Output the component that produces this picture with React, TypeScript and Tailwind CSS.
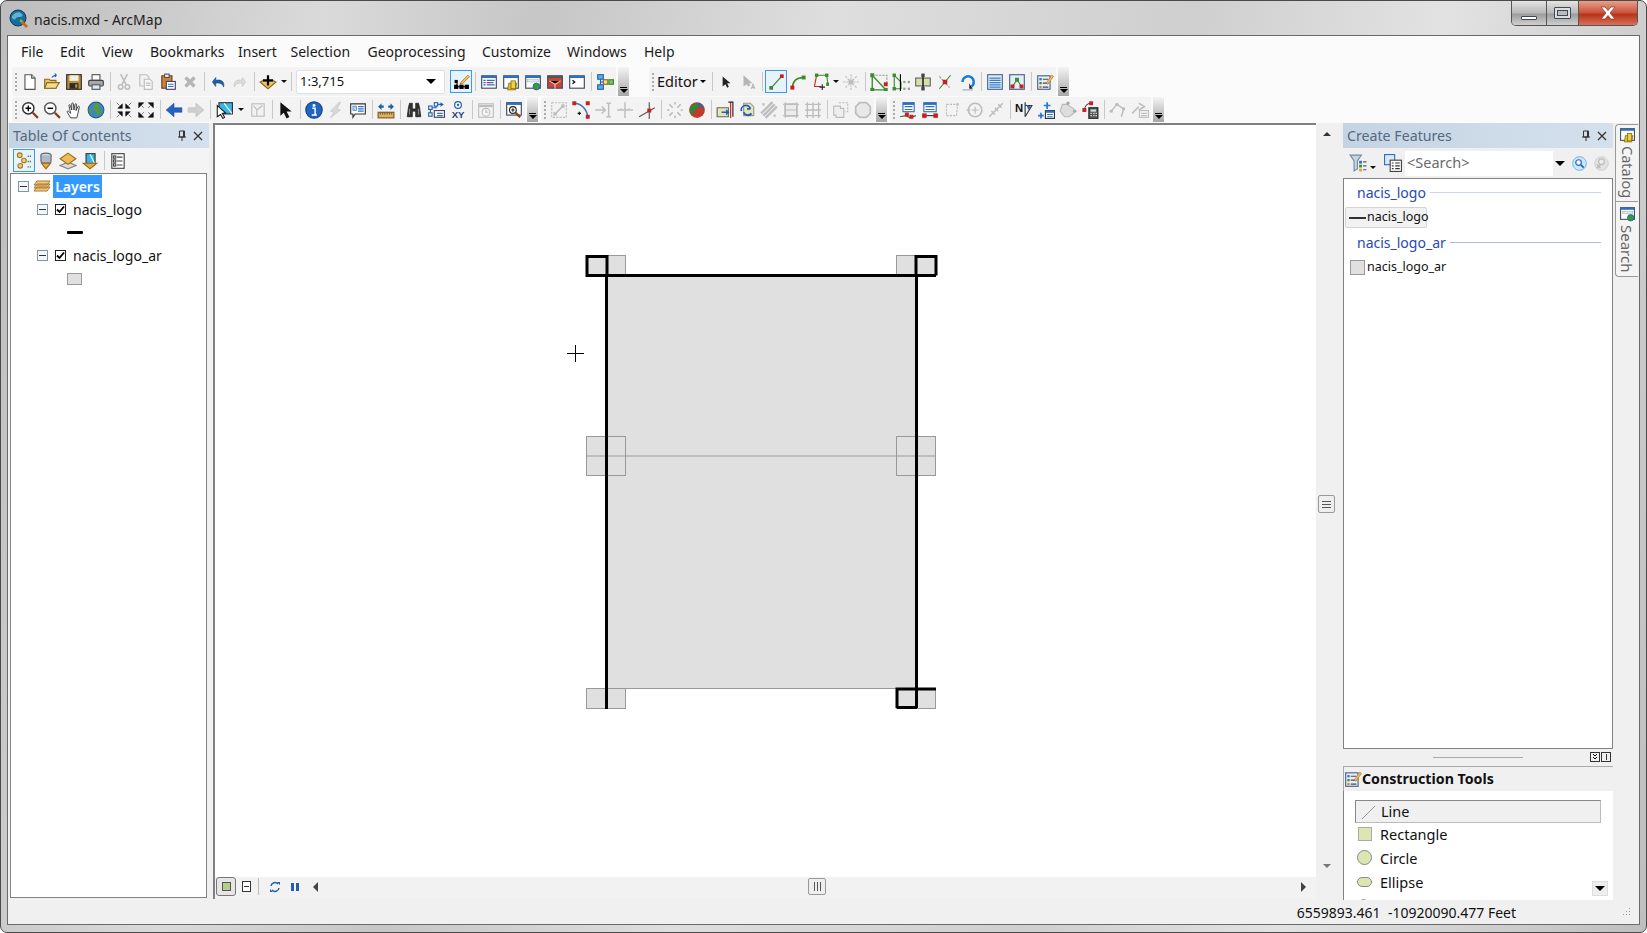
import type { ReactNode } from "react";

const R = "#c8201c";
const G = "#3c8a2e";
const D = "#bdbdbd";

const Node = ({ x, y, c = R, s = 3 }: { x: number; y: number; c?: string; s?: number }) => (
  <rect x={x - s / 2} y={y - s / 2} width={s} height={s} fill={c} />
);

const Win = ({ children }: { children?: ReactNode }) => (
  <>
    <rect x="1.5" y="2.5" width="13" height="11" fill="#fff" stroke="#3b4a5a" />
    <rect x="1.5" y="2.5" width="13" height="2" fill="#2f6fc0" />
    {children}
  </>
);

const icons: Record<string, ReactNode> = {
  new: (
    <>
      <path d="M3.5 1.5h6l3 3v10h-9z" fill="#fff" stroke="#555" />
      <path d="M9.5 1.5v3h3" fill="#ddd" stroke="#555" />
    </>
  ),
  open: (
    <>
      <path d="M1.5 13.5v-8h4l1 1h5v7z" fill="#e8c765" stroke="#8a6a1c" />
      <path d="M1.5 13.5l2-5h11l-3 5z" fill="#f4dc8a" stroke="#8a6a1c" />
      <path d="M8 4c1-2 3-2 4-2m0 0l-1.5-1.5M12 2l-1.5 1.5" stroke="#1f5fae" fill="none" />
    </>
  ),
  save: (
    <>
      <rect x="1.5" y="1.5" width="13" height="13" fill="#b58f3c" stroke="#2b2b2b" />
      <rect x="4" y="2" width="8" height="5" fill="#f2efe2" />
      <rect x="4" y="9" width="8" height="5" fill="#2b2b2b" />
      <rect x="9" y="10" width="2" height="3" fill="#b58f3c" />
    </>
  ),
  print: (
    <>
      <rect x="4.5" y="1.5" width="7" height="5" fill="#fff" stroke="#555" />
      <rect x="1.5" y="6.5" width="13" height="5" rx="1" fill="#a8a8a8" stroke="#444" />
      <rect x="4.5" y="10.5" width="7" height="4" fill="#dbe9f6" stroke="#555" />
    </>
  ),
  cut: (
    <>
      <circle cx="5" cy="12.5" r="2" fill="none" stroke={D} strokeWidth="1.4" />
      <circle cx="11" cy="12.5" r="2" fill="none" stroke={D} strokeWidth="1.4" />
      <path d="M6 10.5L11 1M10 10.5L5 1" stroke={D} strokeWidth="1.4" />
    </>
  ),
  copy: (
    <>
      <path d="M2.5 1.5h6l2 2v8h-8z" fill="#f2f2f2" stroke={D} />
      <path d="M6.5 5.5h5l2 2v7h-7z" fill="#f8f8f8" stroke={D} />
      <path d="M8 9h4M8 11h4" stroke={D} />
    </>
  ),
  paste: (
    <>
      <rect x="2.5" y="2.5" width="9" height="11" fill="#c9853f" stroke="#6a4214" />
      <rect x="5" y="1" width="4" height="3" fill="#eee" stroke="#555" />
      <rect x="6.5" y="7.5" width="8" height="7" fill="#fff" stroke="#446" />
      <path d="M8 10h5M8 12h5" stroke="#2f6fc0" />
    </>
  ),
  del: <path d="M4 4l8 8M12 4l-8 8" stroke="#b5b5b5" strokeWidth="3" />,
  undo: <path d="M3 8l3-4v2.500c5-1 8 1 7 6-1-3-3-4-7-3.500V12z" fill="#1f5fae" stroke="#123f78" strokeWidth=".5" />,
  redo: <path d="M13 8l-3-4v2.500c-5-1-8 1-7 6 1-3 3-4 7-3.500V12z" fill="#ddd" stroke="#bbb" strokeWidth=".5" />,
  add: (
    <>
      <path d="M8 14L1 8l2-1h10l2 1z" fill="#f3c75a" stroke="#8a6a1c" />
      <path d="M8 2v9M3.500 6.500h9" stroke="#000" strokeWidth="2" />
    </>
  ),
  edit: (
    <>
      <path d="M3 13h10M4 9L3 13" stroke="#000" />
      <Node x={3} y={8} c="#000" />
      <Node x={3} y={13} c="#000" s={4} />
      <Node x={8} y={13} c="#000" s={4} />
      <Node x={13} y={13} c="#000" s={4} />
      <path d="M7 9L14 2l1.500 1.500L8.500 10.500z" fill="#f1c25a" stroke="#b0701c" strokeWidth=".7" />
      <path d="M7 9l-.5 2 2-.5z" fill="#d43" />
    </>
  ),
  win1: (
    <Win>
      <path d="M3 6.500h2M6 6.500h7M3 8.500h2M6 8.500h6M3 10.500h2M6 10.500h7" stroke="#2f6fc0" />
      <path d="M6 8.500h4" stroke="#d33" />
    </Win>
  ),
  win2: (
    <Win>
      <path d="M5 15l1-6h7l-1 6z" fill="#e8c020" stroke="#6b5a10" strokeWidth=".6" />
      <rect x="8" y="7" width="4" height="7" fill="#f0d040" stroke="#6b5a10" strokeWidth=".6" />
    </Win>
  ),
  win3: (
    <Win>
      <rect x="3" y="6" width="10" height="2" fill="#dbe9f6" stroke="#8aa" strokeWidth=".4" />
      <circle cx="11" cy="12" r="3" fill="#3a9a3a" stroke="#1f5fae" strokeWidth=".8" />
    </Win>
  ),
  win4: (
    <>
      <rect x="1.500" y="2.500" width="13" height="11" fill="#c8453a" stroke="#3b4a5a" />
      <rect x="1.500" y="2.500" width="13" height="2" fill="#555" />
      <path d="M3 7l5 3 5-3M8 10v4" stroke="#f5c0b0" />
    </>
  ),
  win5: (
    <Win>
      <path d="M4 6.500l2 1.500-2 1.500" stroke="#000" fill="none" />
    </Win>
  ),
  model: (
    <>
      <rect x="1.500" y="1.500" width="5" height="4" fill="#5ab0e8" stroke="#1f5fae" />
      <rect x="1.500" y="10.500" width="5" height="4" fill="#5ab0e8" stroke="#1f5fae" />
      <rect x="6.500" y="6" width="4" height="4" fill="#f2e08a" stroke="#8a6a1c" />
      <rect x="11.500" y="6" width="4" height="4" fill="#7cc36a" stroke={G} />
      <path d="M4 5.500V8h2.500M4 10.500V8" stroke="#1f5fae" fill="none" />
    </>
  ),
  arrowTool: <path d="M5 3v9l2.500-2 1.500 3 1.500-.8-1.500-3H12z" fill="#222" />,
  annoTool: (
    <>
      <path d="M4 2v10l3-2 1 2 2-1-1-2h3z" fill="#b5b5b5" />
      <path d="M11 14l1.500-4 1.500 4M11.500 13h2" stroke="#b5b5b5" fill="none" />
    </>
  ),
  straight: (
    <>
      <path d="M3 14L13 3" stroke={G} strokeWidth="1.200" />
      <Node x={3} y={14} c={G} s={3.500} />
      <Node x={13} y={3} c={R} s={3.500} />
    </>
  ),
  curve: (
    <>
      <path d="M3 14C3 7 7 4 13 4" stroke={G} strokeWidth="1.400" fill="none" />
      <Node x={3} y={13} c={R} s={3.500} />
      <Node x={13} y={4} c={G} s={3.500} />
    </>
  ),
  poly: (
    <>
      <path d="M5 2h9l1 8" stroke={G} fill="none" />
      <path d="M3 12h6M3 12L5 2" stroke={R} />
      <Node x={5} y={2} c={G} />
      <Node x={14} y={2} c={G} />
      <Node x={15} y={10} c={G} />
      <path d="M10 10v5M7.500 12.500h5" stroke="#222" />
    </>
  ),
  explode: (
    <>
      <path d="M8 1v14M1 8h14M3 3l10 10M13 3L3 13" stroke={D} strokeDasharray="2 1" />
      <rect x="6" y="6" width="4" height="4" fill={D} />
    </>
  ),
  sqLine: (
    <>
      <path d="M2 2v13h12L2 2" stroke={G} fill="none" strokeWidth="1.200" />
      <path d="M2 2h13v8" stroke="#999" strokeDasharray="2 1" fill="none" />
      <Node x={2} y={2} c={G} s={3.500} />
      <Node x={2} y={15} c={G} s={3.500} />
      <Node x={14} y={15} c={G} s={3.500} />
      <Node x={14} y={10} c={R} s={3.500} />
    </>
  ),
  splitLine: (
    <>
      <path d="M2 2v12h6V8z" stroke={G} fill="none" />
      <path d="M7.500 1v15" stroke="#000" />
      <Node x={2} y={2} c={G} />
      <Node x={2} y={14} c={G} />
      <rect x="10" y="7" width="2" height="2" fill="#999" />
      <rect x="14" y="7" width="2" height="2" fill="#999" />
      <rect x="10" y="13" width="2" height="2" fill="#999" />
      <rect x="14" y="13" width="2" height="2" fill="#999" />
    </>
  ),
  splitPoly: (
    <>
      <rect x="1.500" y="4.500" width="13" height="7" fill="#d4e0a8" stroke="#666" />
      <path d="M8 1v14" stroke="#222" strokeWidth="1.400" />
      <rect x="6.500" y="0.500" width="3" height="3" fill="#444" />
      <rect x="6.500" y="12.500" width="3" height="3" fill="#444" />
    </>
  ),
  cross: (
    <>
      <path d="M3 14L13 2" stroke={G} />
      <path d="M3 3l9 10" stroke="#999" strokeDasharray="2 1" />
      <Node x={8} y={8} c={R} s={4} />
    </>
  ),
  rotate: (
    <>
      <path d="M4 8a5 5 0 1 1 8 4" stroke="#1c80d0" strokeWidth="2.200" fill="none" />
      <path d="M10 9v5h3z" fill="#222" />
      <path d="M4 15h9" stroke="#9ab" />
    </>
  ),
  attrs: (
    <>
      <rect x="1.500" y="1.500" width="13" height="13" fill="#e3eef9" stroke="#44648a" />
      <path d="M3 4.500h10M3 6.500h10M3 8.500h10M3 10.500h10M3 12.500h10" stroke="#3c7cc0" />
    </>
  ),
  sketch: (
    <>
      <rect x="1.500" y="1.500" width="13" height="13" fill="#e3eef9" stroke="#44648a" />
      <path d="M4 12l4-6 4 6" stroke={G} fill="none" />
      <Node x={8} y={6} c={G} s={3.500} />
      <Node x={4} y={12} c={R} s={3.500} />
      <Node x={12} y={12} c={R} s={3.500} />
    </>
  ),
  create: (
    <>
      <rect x="1.500" y="2.500" width="11" height="12" fill="#e8eef5" stroke="#44648a" />
      <rect x="3" y="4.500" width="2" height="2" fill="#2f6fc0" />
      <rect x="3" y="8" width="2" height="2" fill={G} />
      <rect x="3" y="11.500" width="2" height="2" fill="#c9853f" />
      <path d="M6 5.500h5M6 9h5M6 12.500h5" stroke="#446" />
      <path d="M9 9l5-7 1.500 1L10.500 10z" fill="#f1c25a" stroke="#b0701c" strokeWidth=".6" />
    </>
  ),
  zoomIn: (
    <>
      <circle cx="6.500" cy="6.500" r="5" fill="#fff" stroke="#333" strokeWidth="1.300" />
      <path d="M4 6.500h5M6.500 4v5" stroke="#000" strokeWidth="1.300" />
      <path d="M10.500 10.500l4.500 4.500" stroke="#8a3b1c" strokeWidth="2" />
    </>
  ),
  zoomOut: (
    <>
      <circle cx="6.500" cy="6.500" r="5" fill="#fff" stroke="#555" strokeWidth="1.300" />
      <path d="M4 6.500h5" stroke="#000" strokeWidth="1.300" />
      <path d="M10.500 10.500l4.500 4.500" stroke="#8a3b1c" strokeWidth="2" />
    </>
  ),
  pan: (
    <path
      d="M5 15l-3-5c-.5-1 .5-1.500 1.500-.5L5 11 3.500 4c-.2-1 1-1 1.300 0L6 8 6 2.500c0-1 1.300-1 1.400 0L8 8l1-5c.2-1 1.300-.8 1.200.2L9.800 8.500 11.500 5c.4-.8 1.400-.5 1.200.5L11.500 11l-1 4z"
      fill="#fff"
      stroke="#333"
      strokeWidth=".8"
    />
  ),
  globe: (
    <>
      <circle cx="8" cy="8" r="7" fill="#3b86c6" stroke="#2b5f8c" />
      <path d="M8 2c3 0 4 2 3 4s1 3 2 2c0 3-3 6-4 5s1-3-1-4-3-2-2-4 0-3 2-3zM2 7c1 0 3 1 3 3s-1 2-2 1-1-3-1-4z" fill="#5a9a3c" />
    </>
  ),
  zin: (
    <path
      d="M6.500 6.500V2.500L2.500 6.500zM9.500 6.500V2.500L13.500 6.500zM6.500 9.500V13.500L2.500 9.500zM9.500 9.500V13.500L13.500 9.500zM1.500 1.500L4 4M14.500 1.500L12 4M1.500 14.500L4 12M14.500 14.500L12 12"
      fill="#111"
      stroke="#111"
      strokeWidth=".5"
    />
  ),
  zout: (
    <path
      d="M1.500 1.500h4.500L1.500 6zM14.500 1.500H10L14.500 6zM1.500 14.500H6L1.500 10zM14.500 14.500H10L14.500 10zM4 4l2 2M12 4l-2 2M4 12l2-2M12 12l-2-2"
      fill="#111"
      stroke="#111"
      strokeWidth=".5"
    />
  ),
  back: <path d="M1 8l7-6v4h7v4H8v4z" fill="#2563c0" stroke="#1b4b94" strokeWidth=".5" />,
  fwd: <path d="M15 8L8 2v4H1v4h7v4z" fill="#cfcfcf" stroke="#b5b5b5" strokeWidth=".5" />,
  selFeat: (
    <>
      <rect x="3.500" y="1.500" width="12" height="10" fill="#35b6e8" stroke="#333" />
      <path d="M8 2l7 9" stroke="#fff" />
      <path d="M2 4v10l3-2 2 3.500 1.500-1L6.500 11l3-.5z" fill="#fff" stroke="#111" strokeWidth=".9" />
    </>
  ),
  clear: (
    <>
      <rect x="2.500" y="2.500" width="11" height="11" fill="#f2f2f2" stroke={D} />
      <path d="M4 4l3 4v5M12 4L7 8" stroke={D} fill="none" />
    </>
  ),
  pointer: <path d="M3 1l0 12 3-2.500 2.500 5 2.500-1.200-2.500-5H13z" fill="#111" />,
  info: (
    <>
      <circle cx="8" cy="8" r="7.300" fill="#1f66c4" stroke="#123f78" />
      <circle cx="8" cy="4" r="1.300" fill="#fff" />
      <path d="M6.500 6.500H9V12h1M6 12.500h4.500" stroke="#fff" strokeWidth="1.300" fill="none" />
    </>
  ),
  bolt: <path d="M11 1L3 9l3 1-3 5 9-7-3-1 3-6z" fill="#d8d8d8" stroke={D} strokeWidth=".5" />,
  callout: (
    <>
      <path d="M1.500 2.500h13v9h-9l-2 3v-3h-2z" fill="#fff" stroke="#333" />
      <rect x="3.500" y="4.500" width="3" height="4" fill="#b8d4ef" stroke="#2f6fc0" strokeWidth=".6" />
      <path d="M8 5h5M8 7h5M8 9h5" stroke="#2f6fc0" />
    </>
  ),
  measure: (
    <>
      <rect x="1" y="10" width="14" height="5" fill="#e0b060" stroke="#7a5a20" />
      <path d="M3 10v2M5 10v2M7 10v2M9 10v2M11 10v2M13 10v2" stroke="#7a5a20" />
      <path d="M1 5l3-3v2h2v2H4v2zM15 5l-3-3v2h-2v2h2v2z" fill="#1f5fae" />
    </>
  ),
  find: (
    <>
      <path d="M2 14l1-8 1-4h2.500v5h3V2H12l1 4 1 8H9.500V9h-3v5z" fill="#333" stroke="#111" strokeWidth=".6" />
      <path d="M4 7v5M12 7v5" stroke="#888" />
    </>
  ),
  route: (
    <>
      <rect x="6.500" y="8.500" width="9" height="6" fill="#fff" stroke="#446" />
      <path d="M9 11h5M9 13h5" stroke="#2f6fc0" />
      <path d="M3 12V6h5V3h5" stroke="#1f5fae" fill="none" />
      <rect x="1.500" y="10.500" width="3" height="3" fill="#fff" stroke="#1f5fae" />
      <rect x="1.500" y="4.500" width="3" height="3" fill="#fff" stroke="#1f5fae" />
      <rect x="6.500" y="1.500" width="3" height="3" fill="#fff" stroke="#1f5fae" />
      <path d="M12 1l3 2-3 2z" fill="#1f5fae" />
    </>
  ),
  xy: (
    <>
      <circle cx="8" cy="3.500" r="3" fill="none" stroke="#1f5fae" />
      <circle cx="8" cy="3.500" r="1" fill="#1f5fae" />
      <text x="8" y="15" textAnchor="middle" fontSize="8.500" fontWeight="700" fill="#1f3f7a" fontFamily="Liberation Sans, sans-serif">
        XY
      </text>
    </>
  ),
  time: (
    <>
      <rect x="1.500" y="2.500" width="13" height="12" fill="#f4f4f4" stroke={D} />
      <path d="M2 4.500h12" stroke={D} strokeWidth="2" />
      <circle cx="8" cy="10" r="3.500" fill="none" stroke={D} />
      <path d="M8 8v2h2" stroke={D} fill="none" />
    </>
  ),
  viewer: (
    <>
      <rect x="1.500" y="1.500" width="13" height="11" fill="#fff" stroke="#3b4a5a" />
      <rect x="1.500" y="1.500" width="13" height="2" fill="#2f6fc0" />
      <circle cx="7" cy="8" r="3" fill="#fff" stroke="#222" />
      <path d="M5.500 8h3M7 6.500v3" stroke="#222" />
      <path d="M9.500 10.500l4 4" stroke="#8a3b1c" strokeWidth="2" />
    </>
  ),
  vertices: (
    <>
      <rect x="1.500" y="1.500" width="13" height="13" fill="none" stroke={D} strokeDasharray="2 1" />
      <path d="M4 12l8-8" stroke={D} strokeWidth="1.500" />
      <rect x="10" y="3" width="3" height="3" fill={D} />
      <rect x="3" y="10" width="3" height="3" fill={D} />
    </>
  ),
  reshape: (
    <>
      <path d="M2 2c6 0 11 5 12 12" stroke="#3a78c8" strokeWidth="1.400" fill="none" />
      <Node x={2} y={2} s={3.500} />
      <Node x={14} y={2} s={3.500} />
      <Node x={14} y={14} s={3.500} />
      <path d="M5 11h3M6.500 9.500v3" stroke="#111" />
    </>
  ),
  trim: <path d="M1 8h8M7 5l3 3-3 3M13 2v12M11 2h4M11 14h4" stroke={D} strokeWidth="1.300" fill="none" />,
  extend: <path d="M1 8h14M8 1v14M4 7h1M11 7h1" stroke={D} strokeWidth="1.300" fill="none" />,
  intersect: (
    <>
      <path d="M1 14L15 6M10 1v15" stroke="#555" />
      <Node x={10} y={8.500} s={3.500} />
    </>
  ),
  split: <path d="M3 3l3 3M10 10l3 3M13 3l-3 3M6 10l-3 3M8 1v2M8 13v2M1 8h2M13 8h2" stroke={D} strokeWidth="1.500" />,
  ball: (
    <>
      <circle cx="8" cy="8" r="7" fill="#c23a2a" />
      <path d="M2 6c3-5 9-5 12-1-3-1-7 1-9 5-1 2-1 3 0 4-3-2-4-5-3-8z" fill="#2a8a3a" />
      <path d="M7 2c4-1 7 2 7 5-2-2-4-3-7-5z" fill="#2563c0" />
    </>
  ),
  rotate2: (
    <>
      <path d="M1 14V6h10v8z" fill="#e4e4b8" stroke="#666" />
      <path d="M5 10h6M9 8l2 2-2 2" stroke="#1f5fae" fill="none" strokeWidth="1.300" />
      <path d="M13 1v14" stroke={R} />
      <path d="M11 1h4v13" stroke="#222" fill="none" />
    </>
  ),
  reverse: (
    <>
      <path d="M5 2h6l3 3v8H5z" fill="#e4e4b8" stroke="#999" />
      <path d="M3 9a4 4 0 0 1 8-2m0 0h-3M5 10a4 4 0 0 0 7 1" stroke="#1f5fae" strokeWidth="1.600" fill="none" />
    </>
  ),
  copyPar: <path d="M3 13L13 3M5 15L15 5M1 11L11 1M2 3h2M12 13h2" stroke={D} strokeWidth="2" />,
  frame: (
    <>
      <rect x="2.500" y="2.500" width="11" height="11" fill="#ececec" stroke={D} />
      <path d="M1 3h14M1 13h14M3 1v14M13 1v14M3 8h10" stroke={D} />
    </>
  ),
  grid: <path d="M1 3h14M1 8h14M1 13h14M3 1v14M8 1v14M13 1v14" stroke={D} strokeWidth="1.200" />,
  merge: (
    <>
      <path d="M1.500 4.500h6v2h3v8h-7v-2h-2z" fill="#eee" stroke={D} />
      <path d="M6 1.500h8v8h-3" fill="none" stroke={D} strokeDasharray="2 1" />
    </>
  ),
  union: <path d="M5 1.500h6l3.500 3.500v6L11 14.500H5L1.500 11V5z" fill="#e8e8e8" stroke={D} strokeWidth="1.500" />,
  attrEdit: (
    <>
      <rect x="3.500" y="1.500" width="10" height="8" fill="#fff" stroke="#2f6fc0" />
      <path d="M3.500 2.500h10" stroke="#2f6fc0" strokeWidth="2" />
      <path d="M5 5h7M5 7.500h7" stroke="#2f6fc0" />
      <path d="M1 14l5-1 4 2 5-2" stroke="#555" fill="none" />
      <Node x={7} y={12} s={3.500} />
      <Node x={11} y={14} s={3.500} />
    </>
  ),
  attrEdit2: (
    <>
      <rect x="2.500" y="1.500" width="11" height="8" fill="#fff" stroke="#2f6fc0" />
      <path d="M2.500 2.500h11" stroke="#2f6fc0" strokeWidth="2" />
      <path d="M4 5h8M4 7.500h8" stroke="#2f6fc0" />
      <path d="M3 13h10" stroke="#333" />
      <Node x={3} y={13} s={4} />
      <Node x={13} y={13} s={4} />
    </>
  ),
  skew: (
    <>
      <path d="M3 3h10l-1 10H3z" fill="none" stroke={D} strokeDasharray="2 1" />
      <rect x="12" y="2" width="2" height="2" fill={D} />
    </>
  ),
  circle: (
    <>
      <circle cx="9" cy="8" r="6" fill="none" stroke={D} strokeWidth="1.500" />
      <path d="M1 8h4M9 5v6M6 8h6" stroke={D} />
    </>
  ),
  stitch: <path d="M2 14L14 2M4 9l3 3M7 6l3 3M10 3l3 3" stroke={D} strokeWidth="1.300" />,
  north: (
    <>
      <text x="0" y="10" fontSize="10" fontWeight="700" fill="#111" fontFamily="Liberation Sans, sans-serif">
        N
      </text>
      <path d="M9 1v13M9 14l6-10H9" stroke="#333" fill="none" />
      <path d="M10 3l4 2-2 3z" fill="#2563c0" />
    </>
  ),
  addTo: (
    <>
      <path d="M1 13h5M3.500 10.500v5M9 1v6M6 4h6" stroke="#1f7ad0" strokeWidth="1.500" />
      <rect x="7.500" y="8.500" width="8" height="7" fill="#fff" stroke="#333" />
      <path d="M7.500 9.500h8" stroke="#2f6fc0" strokeWidth="2" />
      <path d="M9 12h5M9 14h5" stroke="#2f6fc0" />
    </>
  ),
  fillet: (
    <>
      <path d="M3 3h4l6 4v4l-4 3H5l-4-5z" fill="#ddd" stroke="#bbb" />
      <circle cx="8" cy="2" r="1.500" fill="#aaa" />
      <circle cx="14" cy="9" r="1.500" fill="#aaa" />
    </>
  ),
  calc: (
    <>
      <path d="M3 9C3 4 6 2 9 2" stroke="#333" fill="none" />
      <Node x={3} y={8} s={3.500} />
      <Node x={9} y={2} s={3.500} />
      <rect x="7" y="6" width="8" height="10" fill="#555" stroke="#222" />
      <rect x="8.500" y="7.500" width="5" height="2" fill="#cde" />
      <path d="M8.500 11h1M11 11h1M13 11h1M8.500 13h1M11 13h1M13 13h1" stroke="#fff" />
    </>
  ),
  topo1: (
    <>
      <path d="M2 9l5-6 6 4-2 7" stroke={D} fill="none" strokeWidth="1.300" />
      <circle cx="7" cy="3" r="1.500" fill={D} />
      <circle cx="2" cy="9" r="1.500" fill={D} />
      <circle cx="13" cy="7" r="1.500" fill={D} />
    </>
  ),
  topo2: (
    <>
      <path d="M1 11l6-6M7 2l5 3-5 3" stroke={D} fill="none" strokeWidth="1.300" />
      <rect x="7.500" y="8.500" width="8" height="6" fill="#f4f4f4" stroke={D} />
      <path d="M9 11h5M9 13h5" stroke={D} />
    </>
  ),
  drawOrder: (
    <>
      <circle cx="3.500" cy="3" r="2.200" fill="#f2d071" stroke="#a07a20" />
      <circle cx="7.500" cy="8" r="2.200" fill="#f2d071" stroke="#a07a20" />
      <circle cx="4" cy="13" r="2.200" fill="#f2d071" stroke="#a07a20" />
      <path d="M11 4h3M11 9h3M11 14h3" stroke="#2d6b1c" strokeDasharray="1 1" strokeWidth="1.400" />
    </>
  ),
  source: (
    <>
      <ellipse cx="8" cy="3" rx="4.500" ry="2" fill="#cdd6e0" stroke="#667" />
      <path d="M3.500 3v5c0 2.500 9 2.500 9 0V3" fill="#aeb9c6" stroke="#667" />
      <path d="M4 10h8l-4 5z" fill="#eba93a" stroke="#9a6a18" />
    </>
  ),
  vis: (
    <>
      <path d="M8 9l7 3-7 3-7-3z" fill="#ddd" stroke="#888" />
      <path d="M8 1l7 5-7 5-7-5z" fill="#eebb55" stroke="#9a6a18" />
    </>
  ),
  selList: (
    <>
      <rect x="4.500" y="1.500" width="8" height="9" fill="#35b6e8" stroke="#333" />
      <path d="M8 2l4 8" stroke="#fff" />
      <path d="M2 10h12l-6 5z" fill="#eba93a" stroke="#9a6a18" />
    </>
  ),
  options: (
    <>
      <rect x="2.500" y="1.500" width="11" height="13" fill="#fff" stroke="#444" />
      <rect x="4" y="3.500" width="2" height="2" fill="none" stroke="#444" />
      <rect x="4" y="7" width="2" height="2" fill="none" stroke="#444" />
      <rect x="4" y="10.500" width="2" height="2" fill="none" stroke="#444" />
      <path d="M7 4.500h5M7 8h5M7 11.500h5" stroke="#444" />
    </>
  ),
  filter: (
    <>
      <path d="M1 1h10L7.500 6v7L4.500 15V6z" fill="#c6d6e4" stroke="#6f8ba0" />
      <rect x="9" y="6" width="2.500" height="2.500" fill="#2f6fc0" />
      <rect x="9" y="9.500" width="2.500" height="2.500" fill={G} />
      <rect x="9" y="13" width="2.500" height="2.500" fill="#d6a43a" />
      <path d="M12.500 7h3M12.500 10.500h3M12.500 14h3" stroke="#555" />
    </>
  ),
  listView: (
    <>
      <rect x="0.500" y="0.500" width="9" height="9" fill="#dce8f4" stroke="#2f6fc0" />
      <rect x="5.500" y="5.500" width="10" height="10" fill="#fff" stroke="#444" />
      <path d="M7 8h1.500M10 8h4M7 10.500h1.500M10 10.500h4M7 13h1.500M10 13h4" stroke="#333" />
    </>
  ),
  searchBtn: (
    <>
      <circle cx="8" cy="8" r="7.300" fill="#cfe6f8" stroke="#6bb0e0" />
      <circle cx="7" cy="7" r="3" fill="#fff" stroke="#1f66c4" strokeWidth="1.300" />
      <path d="M9.500 9.500l3 3" stroke="#1f66c4" strokeWidth="1.800" />
    </>
  ),
  searchOff: (
    <>
      <circle cx="8" cy="8" r="7.300" fill="#e2e2e2" stroke="#d0d0d0" />
      <circle cx="8" cy="6" r="3" fill="#eee" stroke="#bbb" strokeWidth="1.300" />
      <path d="M3 9l4 4M7 9l-4 4" stroke="#bbb" strokeWidth="1.500" />
    </>
  ),
};

const Icon = ({ name, size = 18 }: { name: string; size?: number }) => (
  <svg width={size} height={size} viewBox="0 0 16 16" className="shrink-0">
    {icons[name]}
  </svg>
);

const Caret = () => (
  <span className="inline-block h-0 w-0 border-x-[3px] border-t-[3px] border-x-transparent border-t-[#111]" />
);

const Tool = ({ name, active }: { name: string; active?: boolean }) => (
  <div
    className={`flex h-[23px] w-[22px] shrink-0 items-center justify-center ${active ? "border border-[#3a9bea] bg-[#e6f3fd]" : ""}`}
  >
    <Icon name={name} size={active ? 17 : 18} />
  </div>
);

// tokens: "|" separator, "v" and "V" dropdown caret, "!name" pressed button
const Items = ({ list }: { list: string[] }) => (
  <>
    {list.map((it, i) => {
      if (it === "|")
        return (
          <div key={i} className="flex h-full w-[6px] shrink-0 items-center justify-center">
            <div className="h-[19px] w-px bg-[#c8c8c8]" />
          </div>
        );
      if (it === "v" || it === "V")
        return (
          <div key={i} className={`flex h-full shrink-0 items-center justify-center ${it === "V" ? "w-[12px]" : "w-[9px]"}`}>
            <Caret />
          </div>
        );
      if (it.startsWith("!")) return <Tool key={i} name={it.slice(1)} active />;
      return <Tool key={i} name={it} />;
    })}
  </>
);

const Grip = () => (
  <div className="flex h-full w-[7px] shrink-0 flex-col items-center justify-center gap-[2px]">
    <span className="h-[2px] w-[2px] bg-[#aaa]" />
    <span className="h-[2px] w-[2px] bg-[#aaa]" />
    <span className="h-[2px] w-[2px] bg-[#aaa]" />
    <span className="h-[2px] w-[2px] bg-[#aaa]" />
    <span className="h-[2px] w-[2px] bg-[#aaa]" />
  </div>
);

const Handle = () => (
  <div className="ml-[2px] flex h-full w-[11px] shrink-0 flex-col items-center justify-end bg-[linear-gradient(#f4f4f4,#a6a6a6)] pb-[3px]">
    <span className="mb-[1px] h-px w-[7px] bg-black" />
    <span className="h-0 w-0 border-x-[4px] border-t-[4px] border-x-transparent border-t-black" />
  </div>
);

const Bar = ({ children, className = "" }: { children: ReactNode; className?: string }) => (
  <div className={`flex h-full items-center rounded-l-[3px] bg-[#f3f3f3] ${className}`}>{children}</div>
);

const menu = [
  { label: "File", width: "w-[39px]" },
  { label: "Edit", width: "w-[42px]" },
  { label: "View", width: "w-[48px]" },
  { label: "Bookmarks", width: "w-[88px]" },
  { label: "Insert", width: "w-[52.500px]" },
  { label: "Selection", width: "w-[77px]" },
  { label: "Geoprocessing", width: "w-[114.500px]" },
  { label: "Customize", width: "w-[85px]" },
  { label: "Windows", width: "w-[77px]" },
  { label: "Help", width: "w-[40px]" },
];

const Minus = () => (
  <span className="flex h-[11px] w-[11px] items-center justify-center border border-[#7f95a8] bg-[#f4f6f8]">
    <span className="h-px w-[7px] bg-[#333]" />
  </span>
);

const Check = () => (
  <span className="flex h-[11px] w-[11px] items-center justify-center border border-[#222] bg-white">
    <svg width="9" height="9" viewBox="0 0 9 9">
      <path d="M1 4.500l2.500 2.500L8 1.500" stroke="#000" strokeWidth="1.800" fill="none" />
    </svg>
  </span>
);

const Pin = () => (
  <svg width="10" height="12" viewBox="0 0 10 12">
    <path d="M2.500 1h5v6h-5zM1 7h8M5 7v4M6.500 1v6" stroke="#333" fill="none" />
  </svg>
);

const X = () => (
  <svg width="10" height="10" viewBox="0 0 10 10">
    <path d="M1 1l8 8M9 1L1 9" stroke="#333" strokeWidth="1.300" />
  </svg>
);

const PanelHead = ({ title }: { title: string }) => (
  <div className="flex h-[25px] shrink-0 items-center justify-between bg-[linear-gradient(90deg,#c5d4e4,#d4e0ec)] pl-[4px] pr-[6px] text-[14.200px] text-[#56697d]">
    <span>{title}</span>
    <div className="flex items-center gap-[6px]">
      <Pin />
      <X />
    </div>
  </div>
);

const MapDrawing = () => (
  <svg width="400" height="470" viewBox="0 0 400 470" className="absolute left-[368px] top-[130px]">
    <rect x="23" y="20" width="310" height="413.500" fill="#e0e0e0" />
    <g fill="#e0e0e0" stroke="#999" strokeWidth="1">
      <rect x="3.500" y="0.500" width="39" height="20" />
      <rect x="313.500" y="0.500" width="39" height="20" />
      <rect x="3.500" y="181.500" width="39" height="39" />
      <rect x="313.500" y="181.500" width="39" height="39" />
      <rect x="3.500" y="433.500" width="39" height="20" />
      <rect x="313.500" y="433.500" width="39" height="20" />
      <path d="M3.500 201h349M23.500 433.500h310M23 181.500v39M333 181.500v39" fill="none" />
    </g>
    <g fill="none" stroke="#000" strokeWidth="3">
      <path d="M4 1.500h20v19H4zM4 20.500h349M333 20.500v-19h20v19" />
      <path d="M23.500 20v434M333.500 20v433" />
      <path d="M314 453v-19h39M314 452.500h20" />
    </g>
  </svg>
);

export default function App() {
  return (
    <div className="h-[933px] w-[1647px] overflow-hidden bg-white font-['Noto_Sans',sans-serif] text-[14px] text-[#111]">
      <div className="flex h-[933px] w-[1647px] flex-col rounded-[7px] border border-[#4a4a4a] bg-[linear-gradient(100deg,#bdbdbd_0%,#dadada_18%,#c6c6c6_30%,#dedede_46%,#cfcfcf_66%,#e2e2e2_80%,#bfbfbf_100%)] px-[6px] pb-[7px]">
        {/* title bar */}
        <div className="flex h-[34px] shrink-0 items-start justify-between">
          <div className="flex h-[36px] items-center gap-[5px] pl-[2px]">
            <svg width="20" height="20" viewBox="0 0 20 20">
              <circle cx="9" cy="9" r="8" fill="#1c6a9a" stroke="#0d3a58" />
              <path d="M4 6c2-3 7-4 9-1s-2 3-4 3-3 4-5 2-1-3 0-4z" fill="#5cb2d8" />
              <path d="M11 11c1-1 3 0 3 1s-2 2-3 1 0-1 0-2z" fill="#7ab84a" />
              <path d="M13 13l5 5" stroke="#c96a20" strokeWidth="3" />
            </svg>
            <span className="text-[14px] text-[#222]">nacis.mxd - ArcMap</span>
          </div>
          <div className="mr-[2px] flex h-[25px] overflow-hidden rounded-b-[5px] border border-t-0 border-[#555]">
            <div className="flex w-[35px] items-end justify-center border-r border-[#555] bg-[linear-gradient(#e4e4e4,#b8b8b8_50%,#9c9c9c_55%,#cfcfcf)] pb-[5px]">
              <span className="h-[4px] w-[16px] rounded-[1px] border border-[#3d4a55] bg-white" />
            </div>
            <div className="flex w-[32px] items-center justify-center border-r border-[#555] bg-[linear-gradient(#e4e4e4,#b8b8b8_50%,#9c9c9c_55%,#cfcfcf)]">
              <span className="flex h-[12px] w-[17px] items-center justify-center rounded-[1px] border border-[#3d4a55] bg-[#dcdcdc]">
                <span className="h-[6px] w-[11px] border border-[#3d4a55] bg-[#bcbcbc]" />
              </span>
            </div>
            <div className="flex w-[58px] items-center justify-center bg-[linear-gradient(#e8a08c,#c9503a_50%,#b63318_55%,#d9705a)]">
              <svg width="16" height="14" viewBox="0 0 16 14">
                <path d="M1 1h4l3 3.500L11 1h4L10 7l5 6h-4L8 9.500 5 13H1l5-6z" fill="#fff" stroke="#7a3a2a" strokeWidth=".7" />
              </svg>
            </div>
          </div>
        </div>

        {/* client area */}
        <div className="flex min-h-0 flex-1 flex-col border border-[#6a6a6a] bg-[#f0f0f0]">
          <div className="h-[87px] shrink-0 bg-[#fbfbfb]">
            <div className="flex h-[31px] items-center pl-[13px] text-[14px] text-[#1a1a1a]">
              {menu.map((m) => (
                <span key={m.label} className={`shrink-0 ${m.width}`}>
                  {m.label}
                </span>
              ))}
            </div>

            {/* toolbar row 1 */}
            <div className="flex h-[29px] items-stretch pl-[4px]">
              <Bar>
                <Grip />
                <Items list={["new", "open", "save", "print", "|", "cut", "copy", "paste", "del", "|", "undo", "redo", "|", "add", "v", "|"]} />
                <div className="ml-[2px] mr-[5px] flex h-[24px] w-[149px] items-center justify-between rounded-[2px] border border-[#e0e0e0] bg-white pl-[3px] pr-[8px] text-[13px]">
                  <span>1:3,715</span>
                  <span className="h-0 w-0 border-x-[5px] border-t-[5px] border-x-transparent border-t-black" />
                </div>
                <Items list={["!edit", "|", "win1", "win2", "win3", "win4", "win5", "|", "model"]} />
              </Bar>
              <Handle />
              <Bar className="ml-[20px]">
                <Grip />
                <div className="flex w-[53px] shrink-0 items-center pl-[1px] text-[14.500px]">
                  Editor
                  <span className="ml-[2px] h-0 w-0 border-x-[3px] border-t-[3px] border-x-transparent border-t-black" />
                </div>
                <Items list={["|", "arrowTool", "annoTool", "|", "!straight", "curve", "poly", "v", "explode", "|", "sqLine", "splitLine", "splitPoly", "cross", "rotate", "|", "attrs", "sketch", "|", "create"]} />
              </Bar>
              <Handle />
            </div>

            {/* toolbar row 2 */}
            <div className="flex h-[26px] items-stretch pl-[4px] pt-px">
              <Bar>
                <Grip />
                <Items list={["zoomIn", "zoomOut", "pan", "globe", "|", "zin", "zout", "|", "back", "fwd", "|", "selFeat", "V", "clear", "|", "pointer", "|", "info", "bolt", "callout", "|", "measure", "|", "find", "route", "xy", "|", "time", "|", "viewer"]} />
              </Bar>
              <Handle />
              <Bar className="ml-[3px]">
                <Grip />
                <Items list={["vertices", "reshape", "trim", "extend", "intersect", "|", "split", "ball", "|", "rotate2", "reverse", "copyPar", "frame", "grid", "|", "merge", "union"]} />
              </Bar>
              <Handle />
              <Bar className="ml-[3px]">
                <Grip />
                <Items list={["attrEdit", "attrEdit2", "skew", "circle", "stitch", "|", "north", "addTo", "fillet", "calc", "|", "topo1", "topo2"]} />
              </Bar>
              <Handle />
            </div>
          </div>

          {/* main row */}
          <div className="flex min-h-0 flex-1">
            {/* table of contents */}
            <div className="ml-px flex w-[200px] shrink-0 flex-col">
              <PanelHead title="Table Of Contents" />
              <div className="flex h-[25px] shrink-0 items-center bg-[#f4f4f4] pl-[4px]">
                <Tool name="drawOrder" active />
                <Tool name="source" />
                <Tool name="vis" />
                <Tool name="selList" />
                <Items list={["|"]} />
                <Tool name="options" />
              </div>
              <div className="ml-px mr-[2px] h-[725px] border border-[#828282] bg-white pl-[7px] text-[14px]">
                <div className="flex h-[25px] items-center">
                  <Minus />
                  <svg width="18" height="16" viewBox="0 0 18 16" className="ml-[4px]">
                    <path d="M4 2h13l-3 4H1zM4 5h13l-3 4H1zM4 8h13l-3 4H1z" fill="#f2c883" stroke="#a87a30" />
                  </svg>
                  <span className="ml-[2px] flex h-[23px] w-[49px] items-center justify-center bg-[#3399ff] font-semibold text-white">Layers</span>
                </div>
                <div className="flex h-[21px] items-center pl-[19px]">
                  <Minus />
                  <span className="ml-[7px]"><Check /></span>
                  <span className="ml-[7px]">nacis_logo</span>
                </div>
                <div className="flex h-[25px] items-center pl-[49px]">
                  <span className="h-[3px] w-[16px] rounded-[1px] bg-black" />
                </div>
                <div className="flex h-[21px] items-center pl-[19px]">
                  <Minus />
                  <span className="ml-[7px]"><Check /></span>
                  <span className="ml-[7px]">nacis_logo_ar</span>
                </div>
                <div className="flex h-[26px] items-center pl-[49px]">
                  <span className="h-[12px] w-[15px] border border-[#999] bg-[#e0e0e0]" />
                </div>
              </div>
            </div>

            {/* map */}
            <div className="ml-[4px] flex w-[1124px] shrink-0 flex-col">
              <div className="flex h-[754px] shrink-0">
                <div className="relative w-[1103px] shrink-0 border-l-2 border-t-2 border-[#808080] bg-white">
                  <MapDrawing />
                  <svg width="17" height="17" viewBox="0 0 17 17" className="absolute left-[352px] top-[220px]">
                    <path d="M8.500 0v17M0 8.500h17" stroke="#000" />
                  </svg>
                </div>
                <div className="flex w-[21px] shrink-0 flex-col items-center justify-between bg-[#f0f0f0] py-[9px]">
                  <span className="h-0 w-0 border-x-[4px] border-b-[4px] border-x-transparent border-b-[#333]" />
                  <div className="mt-[358px] flex h-[18px] w-[17px] flex-col items-center justify-center gap-[2px] rounded-[2px] border border-[#999] bg-[#eee]">
                    <span className="h-px w-[9px] bg-[#555]" />
                    <span className="h-px w-[9px] bg-[#555]" />
                    <span className="h-px w-[9px] bg-[#555]" />
                  </div>
                  <span className="mt-[350px] h-0 w-0 border-x-[4px] border-t-[4px] border-x-transparent border-t-[#777]" />
                </div>
              </div>
              <div className="flex h-[22px] w-[1103px] shrink-0 items-center border-l-2 border-[#808080] bg-[#f2f2f2] pb-[3px] pl-px">
                <div className="flex h-[19px] w-[20px] items-center justify-center rounded-[3px] border border-[#777] bg-[#e6e6e6]">
                  <span className="h-[9px] w-[9px] border border-[#555] bg-[#b4cf8a]" />
                </div>
                <div className="ml-[6px] flex h-[11px] w-[9px] items-center justify-center border border-[#333] bg-white">
                  <span className="h-px w-[5px] bg-[#333]" />
                </div>
                <div className="ml-[7px] h-[17px] w-px bg-[#bbb]" />
                <svg width="12" height="12" viewBox="0 0 12 12" className="ml-[10px]">
                  <path d="M2 5a4 4 0 0 1 7-2M10 7a4 4 0 0 1-7 2" stroke="#1f5fae" strokeWidth="1.500" fill="none" />
                  <path d="M8 1l3 0 0 3zM4 11l-3 0 0-3z" fill="#1f5fae" />
                </svg>
                <div className="ml-[10px] flex gap-[2px]">
                  <span className="h-[8px] w-[3px] bg-[#1f5fae]" />
                  <span className="h-[8px] w-[3px] bg-[#1f5fae]" />
                </div>
                <span className="ml-[14px] h-0 w-0 border-y-[5px] border-r-[5px] border-y-transparent border-r-[#444]" />
                <div className="ml-[490px] flex h-[17px] w-[18px] items-center justify-center gap-[2px] rounded-[2px] border border-[#999] bg-[#eee]">
                  <span className="h-[9px] w-px bg-[#555]" />
                  <span className="h-[9px] w-px bg-[#555]" />
                  <span className="h-[9px] w-px bg-[#555]" />
                </div>
                <span className="ml-[475px] h-0 w-0 border-y-[5px] border-l-[5px] border-y-transparent border-l-[#444]" />
              </div>
            </div>

            {/* create features */}
            <div className="ml-[6px] flex w-[270px] shrink-0 flex-col">
              <PanelHead title="Create Features" />
              <div className="flex h-[30px] shrink-0 items-center pl-[6px]">
                <Icon name="filter" />
                <span className="ml-[3px]"><Caret /></span>
                <span className="ml-[8px]"><Icon name="listView" /></span>
                <div className="ml-[3px] flex h-[25px] w-[162px] items-center justify-between bg-white pl-[2px] text-[14.500px] text-[#6b6b6b]">
                  {"<Search>"}
                  <span className="flex h-full w-[14px] items-center justify-center bg-[#f0f0f0]">
                    <span className="h-0 w-0 border-x-[5px] border-t-[5px] border-x-transparent border-t-black" />
                  </span>
                </div>
                <span className="ml-[5px]"><Icon name="searchBtn" size={15} /></span>
                <span className="ml-[7px]"><Icon name="searchOff" size={15} /></span>
              </div>
              <div className="h-[571px] shrink-0 border border-[#828282] bg-white pt-[3px] text-[12.500px]">
                <div className="flex h-[20px] items-center pl-[13px] text-[14px] text-[#2748b8]">
                  nacis_logo
                  <span className="ml-[4px] mr-[11px] h-px flex-1 bg-[#c9d6ee]" />
                </div>
                <div className="ml-px mt-[5px] flex h-[21px] w-[82px] items-center rounded-[2px] border border-[#d4d4d4] bg-[#f2f2f2] pl-[3px]">
                  <span className="mr-[1px] h-[2px] w-[17px] shrink-0 bg-[#333]" />
                  nacis_logo
                </div>
                <div className="mt-[4px] flex h-[20px] items-center pl-[13px] text-[14px] text-[#2748b8]">
                  nacis_logo_ar
                  <span className="ml-[4px] mr-[11px] h-px flex-1 bg-[#a9bbe6]" />
                </div>
                <div className="mt-[5px] flex h-[21px] items-center pl-[6px]">
                  <span className="mr-[2px] h-[15px] w-[15px] border border-[#999] bg-[#e0e0e0]" />
                  nacis_logo_ar
                </div>
              </div>
              <div className="relative flex h-[17px] shrink-0 items-center justify-center">
                <span className="h-px w-[90px] bg-[#aaa]" />
                <div className="absolute right-[2px] top-[3px] flex gap-px">
                  <span className="flex h-[10px] w-[10px] items-center justify-center border border-[#333]">
                    <svg width="6" height="6" viewBox="0 0 6 6">
                      <path d="M1 0l2 2 2-2M1 3l2 2 2-2" stroke="#000" fill="none" />
                    </svg>
                  </span>
                  <span className="flex h-[10px] w-[10px] items-center justify-center border border-[#333]">
                    <span className="h-[6px] w-px bg-[#333]" />
                  </span>
                </div>
              </div>
              <div className="flex min-h-0 flex-1 flex-col">
                <div className="flex h-[25px] shrink-0 items-center border-l border-t border-[#aaa] bg-[#f0f0f0] text-[14.200px] font-bold">
                  <Icon name="create" />
                  <span>Construction Tools</span>
                </div>
                <div className="relative min-h-0 flex-1 overflow-hidden border-l border-[#828282] bg-white pl-[11px] pr-[12px] pt-[9px] text-[14.500px]">
                  <div className="flex h-[23px] items-center border border-b-[#bbb] border-l-[#888] border-r-[#bbb] border-t-[#888] bg-[#f0f0f0]">
                    <svg width="16" height="16" viewBox="0 0 16 16" className="ml-[4px]">
                      <path d="M2 15L15 2" stroke="#999" />
                    </svg>
                    <span className="ml-[5px]">Line</span>
                  </div>
                  <div className="flex h-[24px] items-center pl-[3px]">
                    <span className="mb-[3px] h-[14px] w-[14px] border border-[#aaa] bg-[#dbe6b2]" />
                    <span className="ml-[8px]">Rectangle</span>
                  </div>
                  <div className="flex h-[24px] items-center pl-[2px]">
                    <span className="mb-[3px] h-[15px] w-[15px] rounded-full border border-[#888] bg-[#dbe6b2]" />
                    <span className="ml-[8px]">Circle</span>
                  </div>
                  <div className="flex h-[24px] items-center pl-[2px]">
                    <span className="mb-[3px] h-[10px] w-[15px] rounded-full border border-[#888] bg-[#dbe6b2]" />
                    <span className="ml-[8px]">Ellipse</span>
                  </div>
                  <span className="ml-[4px] mt-[4px] block h-[9px] w-[9px] rounded-full border border-[#888]" />
                  <div className="absolute bottom-[4px] right-[5px] flex h-[15px] w-[16px] items-center justify-center border border-[#ddd] bg-[#eee]">
                    <span className="h-0 w-0 border-x-[5px] border-t-[5px] border-x-transparent border-t-black" />
                  </div>
                </div>
              </div>
            </div>

            {/* side tabs */}
            <div className="ml-[2px] flex w-[23px] shrink-0 flex-col pt-px text-[14.500px] text-[#666]">
              <div className="flex h-[78px] flex-col items-center rounded-tl-[4px] border border-r-0 border-[#999] bg-[#f4f4f4] pt-px">
                <Icon name="win2" size={17} />
                <span className="mt-[3px] [writing-mode:vertical-rl]">Catalog</span>
              </div>
              <div className="flex h-[75px] flex-col items-center rounded-bl-[4px] border border-r-0 border-t-0 border-[#999] bg-[#f4f4f4] pt-[3px]">
                <Icon name="win3" size={17} />
                <span className="mt-[3px] text-[15px] [writing-mode:vertical-rl]">Search</span>
              </div>
            </div>
          </div>

          {/* status bar */}
          <div className="flex h-[24px] shrink-0 items-center justify-end bg-[#f0f0f0] pr-[8px]">
            <span className="mr-[103px] whitespace-pre text-[14px]">6559893.461  -10920090.477 Feet</span>
            <svg width="12" height="12" viewBox="0 0 12 12">
              <path d="M10 2h1v1h-1zM7 5h1v1H7zM10 5h1v1h-1zM4 8h1v1H4zM7 8h1v1H7zM10 8h1v1h-1z" fill="#999" />
            </svg>
          </div>
        </div>
      </div>
    </div>
  );
}
